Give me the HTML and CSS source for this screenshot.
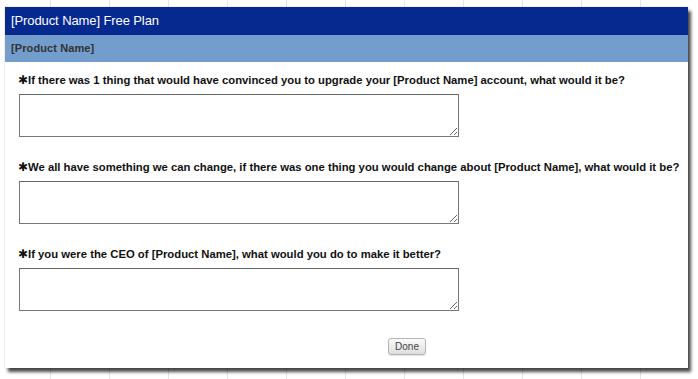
FILE: index.html
```html
<!DOCTYPE html>
<html>
<head>
<meta charset="utf-8">
<link rel="stylesheet" href="styles.css">
</head>
<body>
<div class="panel">
  <div class="header">[Product Name] Free Plan</div>
  <div class="subheader">[Product Name]</div>
  <div class="content">
    <div class="question">
      <label class="label"><span class="req">✱</span>If there was 1 thing that would have convinced you to upgrade your [Product Name] account, what would it be?</label>
      <textarea class="answer"></textarea>
    </div>
    <div class="question">
      <label class="label"><span class="req">✱</span>We all have something we can change, if there was one thing you would change about [Product Name], what would it be?</label>
      <textarea class="answer"></textarea>
    </div>
    <div class="question">
      <label class="label"><span class="req">✱</span>If you were the CEO of [Product Name], what would you do to make it better?</label>
      <textarea class="answer"></textarea>
    </div>
    <div class="actions">
      <button class="done">Done</button>
    </div>
  </div>
</div>
</body>
</html>
```
FILE: styles.css
```css
html, body {
  margin: 0;
  padding: 0;
}
body {
  width: 698px;
  height: 379px;
  overflow: hidden;
  background-color: #ffffff;
  background-image: repeating-linear-gradient(to right, transparent 0 50px, #e4e4e4 50px 51px, transparent 51px 59px);
  font-family: "Liberation Sans", Arial, sans-serif;
  padding-top: 7px;
  box-sizing: border-box;
}
.panel {
  margin-left: 5px;
  width: 683px;
  height: 361px;
  background: #ffffff;
  box-shadow: 0 0 1px rgba(0,0,0,0.35), 3px 4px 3px rgba(0,0,0,0.7);
  display: flex;
  flex-direction: column;
}
.header {
  height: 28px;
  background: #05298f;
  color: #ffffff;
  font-size: 13px;
  line-height: 28px;
  padding-left: 6px;
  letter-spacing: -0.1px;
}
.subheader {
  height: 27px;
  background: #729dcc;
  color: #333333;
  font-size: 11px;
  font-weight: bold;
  line-height: 26px;
  padding-left: 6px;
  letter-spacing: 0.1px;
}
.content {
  padding: 11px 0 0 13px;
  display: flex;
  flex-direction: column;
}
.question {
  display: flex;
  flex-direction: column;
  margin-bottom: 23px;
}
.label {
  display: flex;
  align-items: center;
  font-size: 11.3px;
  font-weight: bold;
  line-height: 14px;
  height: 14px;
  color: #111111;
  white-space: nowrap;
  margin-bottom: 7px;
}
.req {
  font-family: "DejaVu Sans", sans-serif;
  font-size: 12px;
  width: 10px;
  color: #111111;
}
.answer {
  margin: 0 0 0 1px;
  width: 440px;
  height: 43px;
  box-sizing: border-box;
  border: 1px solid #777777;
  border-top-color: #666666;
  padding: 2px;
  resize: both;
  background: #ffffff;
}
.actions {
  display: flex;
  padding-left: 370px;
  margin-top: 4px;
}
.done {
  width: 38px;
  height: 17px;
  padding: 0;
  border: 1px solid #b5b5b5;
  border-radius: 3px;
  background: linear-gradient(#fbfbfb, #dedede);
  box-shadow: 0 1px 1px rgba(0,0,0,0.12);
  font-family: "Liberation Sans", Arial, sans-serif;
  font-size: 10px;
  color: #444444;
  line-height: 15px;
}
```
